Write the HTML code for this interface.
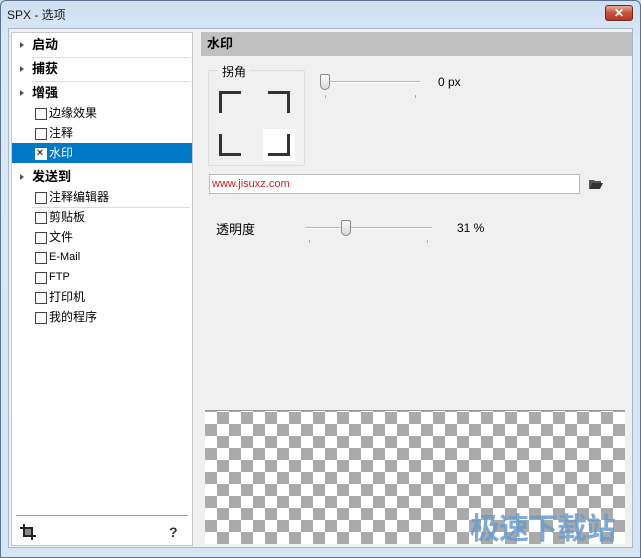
<!DOCTYPE html>
<html><head><meta charset="utf-8"><style>
*{margin:0;padding:0;box-sizing:border-box}
body{width:641px;height:558px;overflow:hidden;font-family:"Liberation Sans","Noto Sans CJK SC",sans-serif;font-size:12px;color:#000;position:relative;background:#c9dcef}
.frame{position:absolute;left:0;top:0;width:641px;height:558px;background:linear-gradient(#cfe0f2,#dbe8f5 40px,#d6e5f4);border:1px solid #5a7390;border-radius:6px 6px 0 0}
.title{position:absolute;left:7px;top:6px;font-size:12px;color:#1a1a1a}
.close{position:absolute;left:605px;top:5px;width:28px;height:16px;background:linear-gradient(#e8a898,#c8503a 50%,#b83a22);border:1px solid #6b2a20;border-radius:3px;color:#fff;font-size:12px;font-weight:bold;text-align:center;line-height:14px}
.content{position:absolute;left:8px;top:28px;width:625px;height:520px;background:#f0f0f0;border:1px solid #a9b8c8}
.left{position:absolute;left:11px;top:32px;width:182px;height:514px;background:#fff;border:1px solid #c8c8c8}
.it{position:absolute;left:0;width:180px;height:20px;line-height:20px}
.hd{font-weight:bold;font-size:13px;padding-left:20px}
.hd:before{content:"";position:absolute;left:8px;top:7px;border-left:4px solid #555;border-top:3px solid transparent;border-bottom:3px solid transparent}
.sub{padding-left:37px}
.sub:before{content:"";position:absolute;left:23px;top:5px;width:10px;height:10px;border:1px solid #444;background:#fff}
.sep{position:absolute;left:20px;width:158px;height:1px;background:#ddd}
.sel{background:#0078c8;color:#fff}
.sel:before{border-color:#fff;background:#fff}
.sel:after{content:"×";position:absolute;left:24px;top:0;width:8px;text-align:center;color:#333;font-size:11px;font-weight:bold;line-height:20px}
.hdr{position:absolute;left:201px;top:32px;width:431px;height:24px;background:#c0c0c0;font-weight:bold;font-size:13px;line-height:24px;padding-left:6px}
.grp{position:absolute;left:208px;top:70px;width:97px;height:96px;border:1px solid #ddd;border-radius:2px}
.grpl{position:absolute;left:218px;top:63px;background:#f0f0f0;padding:0 4px;font-size:12px}
.c{position:absolute;width:22px;height:22px;border-color:#333;border-style:solid;border-width:0}
.track{position:absolute;height:2px;background:#bbb;border-bottom:1px solid #fff}
.thumb{position:absolute;width:10px;height:16px;background:linear-gradient(#fafafa,#d8d8d8);border:1px solid #888;border-radius:2px 2px 5px 5px}
.tick{position:absolute;width:1px;height:3px;background:#aaa}
.check{position:absolute;left:205px;top:410px;width:420px;height:134px;border-top:1px solid #999;background-color:#fff;background-image:linear-gradient(45deg,#aaa 25%,transparent 25%,transparent 75%,#aaa 75%),linear-gradient(45deg,#aaa 25%,transparent 25%,transparent 75%,#aaa 75%);background-size:24px 24px;background-position:0 1px,12px 13px}
</style></head><body>
<div class="frame"></div>
<div class="title">SPX - 选项</div>
<div class="close">✕</div>
<div class="content"></div>
<div class="left">
<div class="it hd" style="top:2px">启动</div><div class="sep" style="top:24px"></div>
<div class="it hd" style="top:26px">捕获</div><div class="sep" style="top:48px"></div>
<div class="it hd" style="top:50px">增强</div>
<div class="it sub" style="top:70px">边缘效果</div>
<div class="it sub" style="top:90px">注释</div>
<div class="it sub sel" style="top:110px">水印</div>
<div class="it hd" style="top:134px">发送到</div>
<div class="it sub" style="top:154px">注释编辑器</div><div class="sep" style="top:174px"></div>
<div class="it sub" style="top:174px">剪贴板</div>
<div class="it sub" style="top:194px">文件</div>
<div class="it sub" style="top:214px;font-size:11px">E-Mail</div>
<div class="it sub" style="top:234px;font-size:11px">FTP</div>
<div class="it sub" style="top:254px">打印机</div>
<div class="it sub" style="top:274px">我的程序</div>
<div style="position:absolute;left:4px;top:482px;width:172px;height:1px;background:#999"></div>
<svg style="position:absolute;left:7px;top:490px" width="18" height="18"><path d="M5 1v12h12M1 5h12v12" stroke="#222" stroke-width="2" fill="none"/><rect x="6" y="6" width="6" height="6" fill="#888"/></svg>
<div style="position:absolute;left:157px;top:491px;font-weight:bold;font-size:14px;color:#333">?</div>
</div>
<div class="hdr">水印</div>
<div class="grp"></div><div class="grpl">拐角</div>
<div class="c" style="left:219px;top:91px;border-top-width:3px;border-left-width:3px"></div>
<div class="c" style="left:268px;top:91px;border-top-width:3px;border-right-width:3px"></div>
<div class="c" style="left:219px;top:134px;border-bottom-width:3px;border-left-width:3px"></div>
<div style="position:absolute;left:263px;top:129px;width:32px;height:32px;background:#fff"></div>
<div class="c" style="left:268px;top:134px;border-bottom-width:3px;border-right-width:3px"></div>
<div class="track" style="left:320px;top:81px;width:100px"></div>
<div class="thumb" style="left:320px;top:74px"></div>
<div class="tick" style="left:325px;top:95px"></div><div class="tick" style="left:415px;top:95px"></div>
<div style="position:absolute;left:438px;top:75px;font-size:12px">0 px</div>
<div style="position:absolute;left:209px;top:174px;width:371px;height:20px;background:#fff;border:1px solid #bbb;color:#d02020;font-size:11px;line-height:18px;padding-left:2px">www.jisuxz.com</div>
<svg style="position:absolute;left:588px;top:178px" width="16" height="12"><path d="M1 2h5l1 1h6v2H4L1 11z" fill="#555"/><path d="M4 5h11l-3 6H1z" fill="#333"/></svg>
<div style="position:absolute;left:216px;top:219px;font-size:13px">透明度</div>
<div class="track" style="left:305px;top:227px;width:127px"></div>
<div class="thumb" style="left:341px;top:220px"></div>
<div class="tick" style="left:309px;top:240px"></div><div class="tick" style="left:427px;top:240px"></div>
<div style="position:absolute;left:457px;top:221px;font-size:12px">31 %</div>
<div class="check"></div>
<div style="position:absolute;left:470px;top:509px;font-size:30px;font-weight:bold;color:#6a9ccc;opacity:.85;letter-spacing:-1px;font-family:'Noto Sans CJK SC',sans-serif;line-height:34px">极速下载站</div>
</body></html>
